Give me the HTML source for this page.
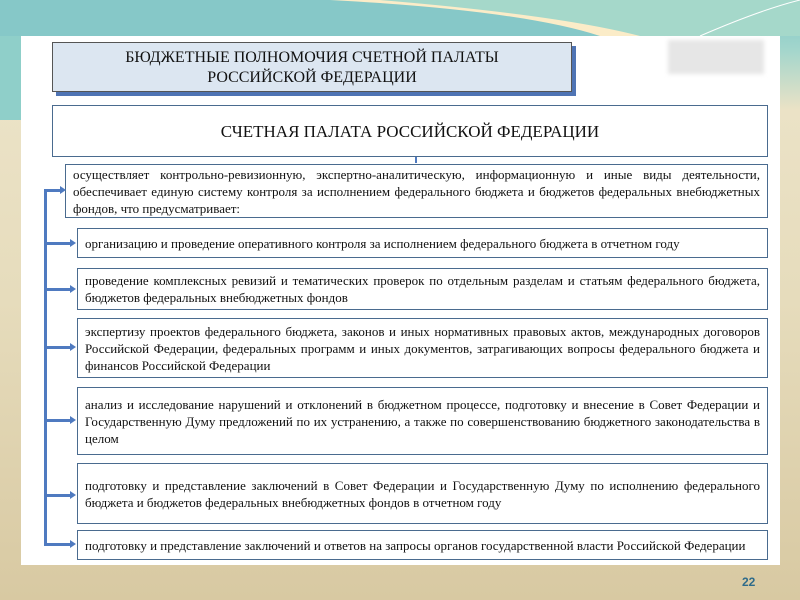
<!DOCTYPE html>
<html><head><meta charset="utf-8"><style>
*{margin:0;padding:0;box-sizing:border-box}
body{width:800px;height:600px;overflow:hidden;position:relative;font-family:"Liberation Serif",serif;
background:linear-gradient(180deg,#7cc6c8 0px,#a3d6cc 50px,#ebe2c6 110px,#e6dcbc 300px,#d8c9a2 600px);}
.wave{position:absolute;left:0;top:0;width:800px;height:120px}
.panel{position:absolute;left:21px;top:36px;width:759px;height:529px;background:#fff}
.b{position:absolute;border:1.5px solid #4a6b8f;background:#fff;font-size:13px;color:#111;line-height:17px;text-align:justify;padding:0 7px;display:flex;align-items:center}
.b span{display:block;width:100%;text-align-last:left}
.title{position:absolute;left:52px;top:42px;width:520px;height:50px;background:#dce6f1;border:1.5px solid #555;box-shadow:4px 4px 0 #4f74b4;text-align:center;font-size:16px;line-height:20px;padding-top:5px;color:#111}
.main{justify-content:center;font-size:17px}
.vl{position:absolute;left:44px;top:189px;width:3px;height:356px;background:#4f7ac0}
.h{position:absolute;height:3px;background:#4f7ac0;left:44px}
.h:after{content:"";position:absolute;right:-4px;top:-3px;border-left:6px solid #4f7ac0;border-top:4.5px solid transparent;border-bottom:4.5px solid transparent}
.num{position:absolute;left:742px;top:575px;font-size:12px;font-weight:bold;color:#2e6b8a;font-family:"Liberation Sans",sans-serif}
</style></head><body>
<svg class="wave" viewBox="0 0 800 120"><path d="M0 0 L800 0 L800 36 L0 36Z" fill="#86c8c8"/><path d="M330 0 Q520 10 600 36 L800 36 L800 0Z" fill="#fbecc8"/><path d="M380 0 Q560 15 640 36 L800 36 L800 0Z" fill="#a5d8ca"/><path d="M0 36 L21 36 L21 120 L0 120Z" fill="#8fcfc9"/><path d="M700 36 Q760 10 800 0" stroke="#fff" fill="none"/></svg>
<div class="panel"></div>
<div style="position:absolute;left:668px;top:40px;width:96px;height:34px;background:#e6e6e6;filter:blur(2px)"></div>
<div class="title">БЮДЖЕТНЫЕ ПОЛНОМОЧИЯ СЧЕТНОЙ ПАЛАТЫ<br>РОССИЙСКОЙ ФЕДЕРАЦИИ</div>
<div class="b main" style="left:52px;top:105px;width:716px;height:52px;text-align:center">СЧЕТНАЯ ПАЛАТА РОССИЙСКОЙ ФЕДЕРАЦИИ</div>
<div style="position:absolute;left:415px;top:157px;width:2px;height:6px;background:#4f7ac0"></div>
<div class="b" style="left:65px;top:164px;width:703px;height:54px"><span>осуществляет контрольно-ревизионную, экспертно-аналитическую, информационную и иные виды деятельности, обеспечивает единую систему контроля за исполнением федерального бюджета и бюджетов федеральных внебюджетных фондов, что предусматривает:</span></div>
<div class="vl"></div>
<div class="h" style="top:189px;width:18px"></div>
<div class="b" style="left:77px;top:228px;width:691px;height:30px"><span>организацию и проведение оперативного контроля за исполнением федерального бюджета в отчетном году</span></div>
<div class="h" style="top:242px;width:28px"></div>
<div class="b" style="left:77px;top:268px;width:691px;height:42px"><span>проведение комплексных ревизий и тематических проверок по отдельным разделам и статьям федерального бюджета, бюджетов федеральных внебюджетных фондов</span></div>
<div class="h" style="top:288px;width:28px"></div>
<div class="b" style="left:77px;top:318px;width:691px;height:60px"><span>экспертизу проектов федерального бюджета, законов и иных нормативных правовых актов, международных договоров Российской Федерации, федеральных программ и иных документов, затрагивающих вопросы федерального бюджета и финансов Российской Федерации</span></div>
<div class="h" style="top:346px;width:28px"></div>
<div class="b" style="left:77px;top:387px;width:691px;height:68px"><span>анализ и исследование нарушений и отклонений в бюджетном процессе, подготовку и внесение в Совет Федерации и Государственную Думу предложений по их устранению, а также по совершенствованию бюджетного законодательства в целом</span></div>
<div class="h" style="top:419px;width:28px"></div>
<div class="b" style="left:77px;top:463px;width:691px;height:61px"><span>подготовку и представление заключений в Совет Федерации и Государственную Думу по исполнению федерального бюджета и бюджетов федеральных внебюджетных фондов в отчетном году</span></div>
<div class="h" style="top:494px;width:28px"></div>
<div class="b" style="left:77px;top:530px;width:691px;height:30px"><span>подготовку и представление заключений и ответов на запросы органов государственной власти Российской Федерации</span></div>
<div class="h" style="top:543px;width:28px"></div>
<div class="num">22</div>
</body></html>
